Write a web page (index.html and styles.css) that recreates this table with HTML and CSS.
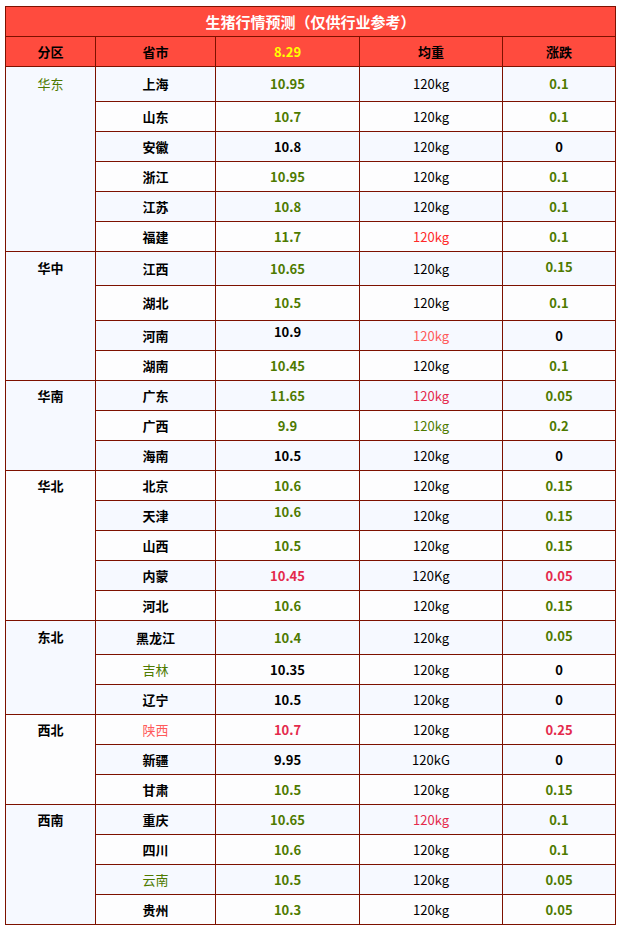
FILE: index.html
```html
<!DOCTYPE html>
<html lang="zh-CN">
<head>
<meta charset="utf-8">
<title>生猪行情预测</title>
<link rel="stylesheet" href="styles.css">
</head>
<body>
<table class="quote">
  <colgroup>
    <col class="c-area"><col class="c-prov"><col class="c-price"><col class="c-wt"><col class="c-chg">
  </colgroup>
  <thead>
    <tr class="title"><th colspan="5">生猪行情预测（仅供行业参考）</th></tr>
    <tr class="head"><th>分区</th><th>省市</th><th class="date">8.29</th><th>均重</th><th>涨跌</th></tr>
  </thead>
  <tbody>
    <tr class="h35"><td rowspan="6" class="area p7 gn nb">华东</td><td>上海</td><td class="gn">10.95</td><td class="w">120kg</td><td class="gn">0.1</td></tr>
    <tr><td>山东</td><td class="gn">10.7</td><td class="w">120kg</td><td class="gn">0.1</td></tr>
    <tr><td>安徽</td><td>10.8</td><td class="w">120kg</td><td>0</td></tr>
    <tr><td>浙江</td><td class="gn">10.95</td><td class="w">120kg</td><td class="gn">0.1</td></tr>
    <tr><td>江苏</td><td class="gn">10.8</td><td class="w">120kg</td><td class="gn">0.1</td></tr>
    <tr><td>福建</td><td class="gn">11.7</td><td class="w rd">120kg</td><td class="gn">0.1</td></tr>

    <tr class="h34"><td rowspan="4" class="area p6">华中</td><td>江西</td><td class="gn">10.65</td><td class="w">120kg</td><td class="gn up2">0.15</td></tr>
    <tr class="h35"><td>湖北</td><td class="gn">10.5</td><td class="w">120kg</td><td class="gn">0.1</td></tr>
    <tr><td>河南</td><td class="up4">10.9</td><td class="w lr">120kg</td><td>0</td></tr>
    <tr><td>湖南</td><td class="gn">10.45</td><td class="w">120kg</td><td class="gn">0.1</td></tr>

    <tr><td rowspan="3" class="area p5">华南</td><td>广东</td><td class="gn">11.65</td><td class="w cr">120kg</td><td class="gn">0.05</td></tr>
    <tr><td>广西</td><td class="gn">9.9</td><td class="w gn">120kg</td><td class="gn">0.2</td></tr>
    <tr><td>海南</td><td>10.5</td><td class="w">120kg</td><td>0</td></tr>

    <tr><td rowspan="5" class="area p5">华北</td><td>北京</td><td class="gn">10.6</td><td class="w">120kg</td><td class="gn">0.15</td></tr>
    <tr><td>天津</td><td class="gn up4">10.6</td><td class="w">120kg</td><td class="gn">0.15</td></tr>
    <tr><td>山西</td><td class="gn">10.5</td><td class="w">120kg</td><td class="gn">0.15</td></tr>
    <tr><td>内蒙</td><td class="cr">10.45</td><td class="w">120Kg</td><td class="cr">0.05</td></tr>
    <tr><td>河北</td><td class="gn">10.6</td><td class="w">120kg</td><td class="gn">0.15</td></tr>

    <tr class="h34"><td rowspan="3" class="area p6">东北</td><td>黑龙江</td><td class="gn">10.4</td><td class="w">120kg</td><td class="gn up2">0.05</td></tr>
    <tr><td class="gn nb">吉林</td><td>10.35</td><td class="w">120kg</td><td>0</td></tr>
    <tr><td>辽宁</td><td>10.5</td><td class="w">120kg</td><td>0</td></tr>

    <tr><td rowspan="3" class="area p5">西北</td><td class="sl nb">陕西</td><td class="cr">10.7</td><td class="w">120kg</td><td class="cr">0.25</td></tr>
    <tr><td>新疆</td><td>9.95</td><td class="w">120kG</td><td>0</td></tr>
    <tr><td>甘肃</td><td class="gn">10.5</td><td class="w">120kg</td><td class="gn">0.15</td></tr>

    <tr><td rowspan="4" class="area p5">西南</td><td>重庆</td><td class="gn">10.65</td><td class="w cr">120kg</td><td class="gn">0.1</td></tr>
    <tr><td>四川</td><td class="gn">10.6</td><td class="w">120kg</td><td class="gn">0.1</td></tr>
    <tr><td class="gn nb">云南</td><td class="gn">10.5</td><td class="w">120kg</td><td class="gn">0.05</td></tr>
    <tr><td>贵州</td><td class="gn">10.3</td><td class="w">120kg</td><td class="gn">0.05</td></tr>
  </tbody>
</table>
</body>
</html>
```

FILE: styles.css
```css
html, body {
  margin: 0;
  padding: 0;
  background: #ffffff;
}
body {
  padding: 6px 0 0 5px;
  font-family: "Noto Sans CJK SC", "Noto Sans", "Liberation Sans", sans-serif;
  font-size: 13px;
  color: #000;
}
.quote {
  border-collapse: collapse;
  table-layout: fixed;
  width: 610px;
  border: 1px solid #7d1100;
}
.c-area { width: 90px; }
.c-prov { width: 120px; }
.c-price { width: 144px; }
.c-wt { width: 143px; }
.c-chg { width: 113px; }

.quote th, .quote td {
  border: 1px solid #7d1100;
  padding: 0;
  text-align: center;
  vertical-align: middle;
  line-height: 20px;
  font-weight: 700;
}
.quote tr { height: 30px; }
.quote tr.h34 { height: 34px; }
.quote tr.h35 { height: 35px; }

.title th {
  background: #ff4b3e;
  color: #ffffff;
  font-size: 15px;
}
.head th {
  background: #ff4b3e;
  color: #000;
  font-size: 13px;
}
.head th.date { color: #ffff00; }

tbody tr:nth-child(odd) { background: #f6f9ff; }
tbody tr:nth-child(even) { background: #fdfdfe; }

.quote td.area {
  vertical-align: top;
}
.quote td.p5 { padding-top: 5px; }
.quote td.p6 { padding-top: 6px; }
.quote td.p7 { padding-top: 7px; }

.quote td.w { font-weight: 400; }
.quote td.nb { font-weight: 400; }

.gn { color: #4e7a00; }
.rd { color: #ff2a2a; }
.lr { color: #ff5a5a; }
.cr { color: #e42a4c; }
.sl { color: #ff5a5a; }

.quote td.up2 { padding-bottom: 4px; }
.quote td.up4 { padding-bottom: 8px; }
```
